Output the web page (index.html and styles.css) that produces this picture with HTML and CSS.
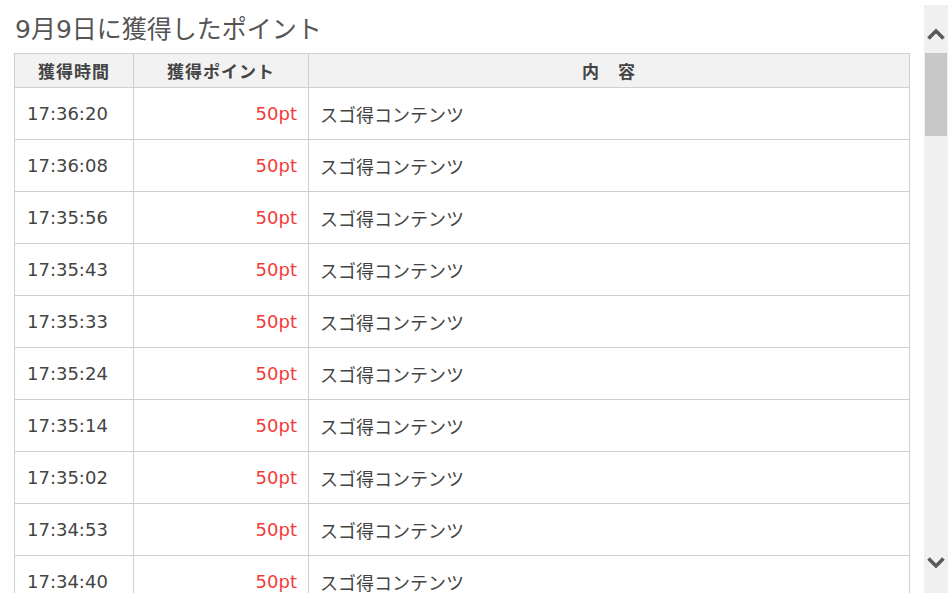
FILE: index.html
```html
<!DOCTYPE html>
<html lang="ja">
<head>
<meta charset="utf-8">
<title>ポイント履歴</title>
<link rel="stylesheet" href="styles.css">
</head>
<body>
<div class="frame">
  <main class="pane">
    <h1 class="title">9月9日に獲得したポイント</h1>
    <table class="history">
      <colgroup>
        <col class="c-time">
        <col class="c-point">
        <col class="c-body">
      </colgroup>
      <thead>
        <tr><th>獲得時間</th><th>獲得ポイント</th><th>内　容</th></tr>
      </thead>
      <tbody>
        <tr><td class="time">17:36:20</td><td class="pt">50pt</td><td class="what">スゴ得コンテンツ</td></tr>
        <tr><td class="time">17:36:08</td><td class="pt">50pt</td><td class="what">スゴ得コンテンツ</td></tr>
        <tr><td class="time">17:35:56</td><td class="pt">50pt</td><td class="what">スゴ得コンテンツ</td></tr>
        <tr><td class="time">17:35:43</td><td class="pt">50pt</td><td class="what">スゴ得コンテンツ</td></tr>
        <tr><td class="time">17:35:33</td><td class="pt">50pt</td><td class="what">スゴ得コンテンツ</td></tr>
        <tr><td class="time">17:35:24</td><td class="pt">50pt</td><td class="what">スゴ得コンテンツ</td></tr>
        <tr><td class="time">17:35:14</td><td class="pt">50pt</td><td class="what">スゴ得コンテンツ</td></tr>
        <tr><td class="time">17:35:02</td><td class="pt">50pt</td><td class="what">スゴ得コンテンツ</td></tr>
        <tr><td class="time">17:34:53</td><td class="pt">50pt</td><td class="what">スゴ得コンテンツ</td></tr>
        <tr><td class="time">17:34:40</td><td class="pt">50pt</td><td class="what">スゴ得コンテンツ</td></tr>
      </tbody>
    </table>
  </main>
  <div class="scrollbar">
    <div class="arrow arrow-up">
      <svg width="18" height="12" viewBox="0 0 18 12"><path d="M1.5 10.5 L9 3 L16.5 10.5" fill="none" stroke="#5a5a5a" stroke-width="3.6"/></svg>
    </div>
    <div class="track"><div class="thumb"></div></div>
    <div class="arrow arrow-down">
      <svg width="18" height="12" viewBox="0 0 18 12"><path d="M1.5 1.5 L9 9 L16.5 1.5" fill="none" stroke="#5a5a5a" stroke-width="3.6"/></svg>
    </div>
  </div>
</div>
</body>
</html>
```
FILE: styles.css
```css
html, body {
  margin: 0;
  padding: 0;
  background: #fff;
}
body {
  font-family: "DejaVu Sans", "Noto Sans CJK JP", sans-serif;
  color: #444;
}
.frame {
  display: flex;
  height: 593px;
  overflow: hidden;
}
.pane {
  width: 896px;
  padding: 0 14px;
  flex: none;
}
.title {
  margin: 0 0 5px 1px;
  padding-top: 12px;
  font-size: 25px;
  line-height: 36px;
  font-weight: normal;
  color: #555;
}
.history {
  width: 896px;
  border-collapse: collapse;
  table-layout: fixed;
}
.c-time { width: 119px; }
.c-point { width: 175px; }
.history th,
.history td {
  border: 1px solid #cfcfcf;
  padding: 0 12px;
}
.history th {
  height: 33px;
  background: #f2f2f2;
  font-size: 17px;
  font-weight: bold;
  color: #444;
  text-align: center;
  letter-spacing: 1px;
}
.history td {
  height: 51px;
  font-size: 18px;
}
.history td.time { padding-left: 12px; }
.history td.pt {
  text-align: right;
  color: #f23b3b;
  padding-right: 11px;
}
.history td.what { padding-left: 11px; }
.scrollbar {
  width: 24px;
  margin-top: 5px;
  height: 588px;
  background: #f0f0f0;
  display: flex;
  flex-direction: column;
  flex: none;
}
.arrow {
  height: 48px;
  display: flex;
  align-items: flex-start;
  justify-content: center;
  box-sizing: border-box;
}
.arrow svg { display: block; }
.arrow-up { padding-top: 23px; }
.arrow-down { padding-top: 12px; }
.track {
  flex: 1;
  padding: 0 1px;
}
.thumb {
  height: 83px;
  background: #c8c8c8;
}
```
